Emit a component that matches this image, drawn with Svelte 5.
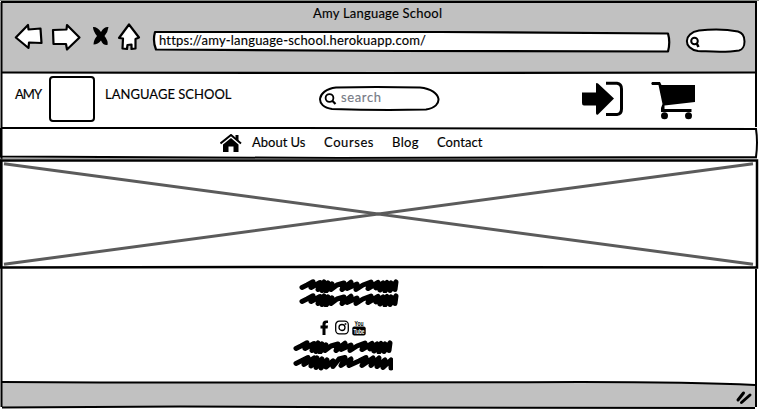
<script>
  const links = [
    { label: 'About Us', w: 54 },
    { label: 'Courses', w: 50 },
    { label: 'Blog', w: 27 },
    { label: 'Contact', w: 46 }
  ];
  const scribble =
    'M3 8.500L8 6L14 2.800L12 8.500L21 3.500L19 10.500L25 3L23 11.500L29 4L27 12L33 5L32 10.500L38 6L45 4L43 10.500L52 3.200L48 9.500L58 5L57 10.500L64 6L72 3L69 9.500L79 3.500L77 9L84 4L81 11L88 3.500L86 12L92 4L91 11.500L97 3L96 10.500';
  const wide =
    'M3 9.500L8 7L15 3.500L11 10.500L21 4L18 12L24 4L23 13.500L29 5L28 14L34 6L33 13L40 7L40 12.500L46 5L52 3.500L48 11.500L58 5L56 11.500L66 7L73 3.500L69 11.500L80 4L78 11.500L86 4L84 12.500L92 6L90 13.500L98 6L98 14';
</script>

{#snippet scrawl(d, h)}
  <svg class="scrawl" width="100" height={h} viewBox="0 0 100 {h}">
    <path {d} fill="none" stroke="#000" stroke-width="5" stroke-linecap="round" stroke-linejoin="round" />
  </svg>
{/snippet}

<div class="window">
  <svg class="frame" width="759" height="409" viewBox="0 0 759 409" fill="none" stroke="#000" stroke-width="2">
    <path d="M2 73V2H756V73Z" fill="#c1c1c1" stroke="none" />
    <path d="M2 382.500L500 382.500Q690 382 756 384.500V407L350 407.500L2 407Z" fill="#c1c1c1" stroke="none" />
    <path d="M0 .5H759" stroke="#858985" stroke-width="1" />
    <path d="M1 2H756V127M756 269V407M1.500 2V407" />
    <path d="M2 72.500L380 73L756 72.500" stroke-width="2.200" />
    <path d="M1 128L300 128L756 129Q758 142 756 157L340 158L1 156.500V128" />
    <path d="M1 160.500H757V267.500L330 267L1 267.500Z" stroke-width="2.500" />
    <path d="M1 159H757" stroke="#444" stroke-width="1" />
    <path d="M4 163.700L753 264.300M4 264.300L753 163.700" stroke="#5b5b5b" stroke-width="3" />
    <path d="M2 382L100 382.500L500 382.300Q675 381 755 385" />
    <path d="M2 407.500L180 406.500L400 407.500L755 408" />
  </svg>

  <header class="chrome">
    <div class="title"><svg class="label" width="129" height="18"><text x="0" y="13" textLength="129">Amy Language School</text></svg></div>
    <div class="bar">
      <svg class="tools" width="130" height="34" viewBox="12 20 130 34" fill="#fff" stroke="#000" stroke-width="2.200" stroke-linejoin="round">
        <path d="M15.800 37.500L28 25L28.500 29.500L40.500 28.500L41.500 43L29 42.500L28.500 48Z" />
        <path d="M53 30L66.500 29.500L67 25L79.500 37.500L67 49.500L66 44L53.500 44Z" />
        <path d="M93 27Q97 26.500 101 32Q104 26.500 108.500 27Q108 32 104.500 36Q108.500 41 107.500 45Q103 45.500 101 40.500Q98 44.500 93.500 44.500Q93.500 40 97 36Q93 31 93 27Z" fill="#000" stroke="none" />
        <path d="M129 24.500L139 37.500L135.500 39V48.500L131.500 49V44.500L127.500 45L127 49L122.500 48.500L123 38.500L119 38Z" />
      </svg>
      <div class="address">
        <svg class="under" width="520" height="24" viewBox="152 29 520 24">
          <path d="M155 32L440 32L668 33.500Q670.500 42 668 51.500L400 51L156 49.500Q152.500 41 155 32Z" fill="#fff" stroke="#000" stroke-width="2.200" stroke-linejoin="round" />
        </svg>
        <svg class="label" width="270" height="18"><text x="0" y="13" textLength="267">https://amy-language-school.herokuapp.com/</text></svg>
      </div>
      <svg class="lookup" width="62" height="28" viewBox="684 27 62 28" fill="#fff" stroke="#000" stroke-width="2">
        <path d="M699 30.500C712 29 728 29.500 738 31.500C747 34 746 49 739 50.500C724 53 711 51.500 698 51C683 49 683 33 699 30.500Z" />
        <circle cx="694.500" cy="41" r="3.300" /><path d="M696.500 43L698.500 47" stroke-width="2.500" />
      </svg>
    </div>
  </header>

  <section class="masthead">
    <svg class="label amy" width="28" height="18"><text x="0" y="13" textLength="27">AMY</text></svg>
    <div class="logo"></div>
    <svg class="label school" width="128" height="18"><text x="0" y="13" textLength="126.500">LANGUAGE SCHOOL</text></svg>
    <div class="search">
      <svg class="under" width="122" height="26" viewBox="318 86 122 26" fill="none" stroke="#000" stroke-width="2">
        <path d="M336 87.500Q375 86.500 420 87.500C443 90 444 107 426 109.500Q380 110.500 332 109C315 107 316 90 336 87.500Z" />
        <circle cx="329.500" cy="98" r="3.900" stroke-width="1.800" /><path d="M332.300 100.800L335.500 104" stroke-width="2.200" />
      </svg>
      <svg class="label grey" width="42" height="18"><text x="0" y="13" textLength="40">search</text></svg>
    </div>
    <svg class="login" width="44" height="38" viewBox="581 80 44 38">
      <path d="M582 92.500H596V84Q596 82.500 598 83.500L614 98.500L598 114.500Q596 115.500 596 113V105.500H584Q582 105.500 582 103Z" />
      <path d="M606 83.300H617Q621.500 84 621.500 89V109Q621.500 114 617 114.500H606" fill="none" stroke="#000" stroke-width="3" />
    </svg>
    <svg class="cart" width="46" height="40" viewBox="650 80 46 40">
      <path d="M652 82H660L661.500 85H695V102L664.500 105.500V109H691.500V112H661V108L662.500 104L658.500 85H652Q650.500 83.500 652 82Z" />
      <circle cx="664.500" cy="115.800" r="3.500" /><circle cx="688.500" cy="115.800" r="3.500" />
    </svg>
  </section>

  <nav>
    <svg class="home" width="22" height="18" viewBox="220 134 22 18">
      <path d="M223 144.500L231 138L238.500 144.500V152H233.500V146.500H228.500V152H223Z" />
      <path d="M220.500 143.500L231 135L241 143.500" fill="none" stroke="#000" stroke-width="2" />
      <path d="M235.500 135H238.500V141L235.500 138.500Z" />
    </svg>
    {#each links as link}
      <a href="#top" style:width="{link.w}px"><svg class="label" width={link.w} height="18"><text x="0" y="13" textLength={link.w - 0.5}>{link.label}</text></svg></a>
    {/each}
  </nav>

  <main></main>

  <footer>
    <div class="lines first">{@render scrawl(scribble, 14)}{@render scrawl(scribble, 14)}</div>
    <div class="social">
      <svg width="9" height="16" viewBox="0 0 9 16"><path d="M2.500 15V8.500H.5V5.500H2.500V4Q2.500 .5 6 .5H8V3H6.500Q5.500 3 5.500 4.500V5.500H8L7.600 8.500H5.500V15Z" /></svg>
      <svg width="14" height="15" viewBox="0 0 14 15" fill="none" stroke="#000" stroke-width="1.300"><rect x=".7" y="1.200" width="12.600" height="12.600" rx="3.500" /><circle cx="7" cy="7.500" r="3" /><circle cx="10.500" cy="4" r=".3" /></svg>
      <svg class="tube" width="14" height="17" viewBox="0 0 14 17"><rect x=".3" y="7.500" width="13.400" height="9" rx="2" /><text x="2.500" y="6.500" textLength="9" lengthAdjust="spacingAndGlyphs">You</text><text x="1.500" y="15" fill="#fff" textLength="11" lengthAdjust="spacingAndGlyphs">Tube</text></svg>
    </div>
    <div class="lines second">{@render scrawl(scribble, 14)}{@render scrawl(wide, 17)}</div>
  </footer>

  <div class="status">
    <svg width="18" height="16" viewBox="735 390 18 16" fill="none" stroke="#000" stroke-width="3" stroke-linecap="round"><path d="M738 400L743.500 393M741.500 402.500L750 395" /></svg>
  </div>
</div>

<style>
  :global(body) { background: #fff; overflow: hidden; }
  .window { width: 759px; height: 409px; position: relative; display: flex; flex-direction: column; font: 13px 'Lato', sans-serif; color: #000; }
  .frame { position: absolute; inset: 0; z-index: -1; }
  svg { display: block; flex: none; }
  .label { overflow: visible; }
  .label text { font: 13px 'Lato', sans-serif; font-variant-ligatures: none; fill: #000; stroke: #000; stroke-width: .15px; }
  .label.grey text { fill: #777b86; stroke: #777b86; }
  .chrome { height: 74px; }
  .title { height: 20px; padding: 5px 0 0 313px; box-sizing: border-box; }
  .bar { display: flex; padding-left: 12px; height: 34px; }
  .address { position: relative; width: 520px; height: 24px; margin: 9px 12px 0 10px; padding: 3px 0 0 7px; box-sizing: border-box; }
  .under { position: absolute; left: 0; top: 0; z-index: -1; }
  .lookup { margin-top: 7px; }
  .masthead { height: 55px; display: flex; align-items: flex-start; padding-left: 15px; }
  .amy, .school { margin-top: 12px; }
  .logo { width: 42px; height: 42px; border: 2px solid #000; border-radius: 4px; margin: 2px 10px 0 6px; }
  .search { position: relative; width: 122px; height: 26px; margin: 12px 141px 0 85px; padding: 3px 0 0 23px; box-sizing: border-box; }
  .login { margin-top: 6px; }
  .cart { margin: 6px 0 0 25px; }
  nav { height: 31px; display: flex; gap: 18px; padding-left: 220px; align-items: flex-start; }
  .home { margin: 5px -8px 0 0; }
  nav a { margin-top: 5px; text-decoration: none; }
  main { height: 108px; }
  footer { height: 114px; }
  .lines { display: flex; flex-direction: column; }
  .first { padding: 11px 0 0 299px; }
  .second { padding: 4px 0 0 293px; }
  .social { display: flex; align-items: center; height: 17px; padding: 12px 0 0 320px; gap: 3px; }
  .social svg:first-child { margin-right: 3px; }
  .tube { overflow: visible; }
  .tube text { font: bold 7px 'Liberation Sans', sans-serif; }
  .status { height: 27px; padding: 8px 0 0 735px; box-sizing: border-box; }
</style>
